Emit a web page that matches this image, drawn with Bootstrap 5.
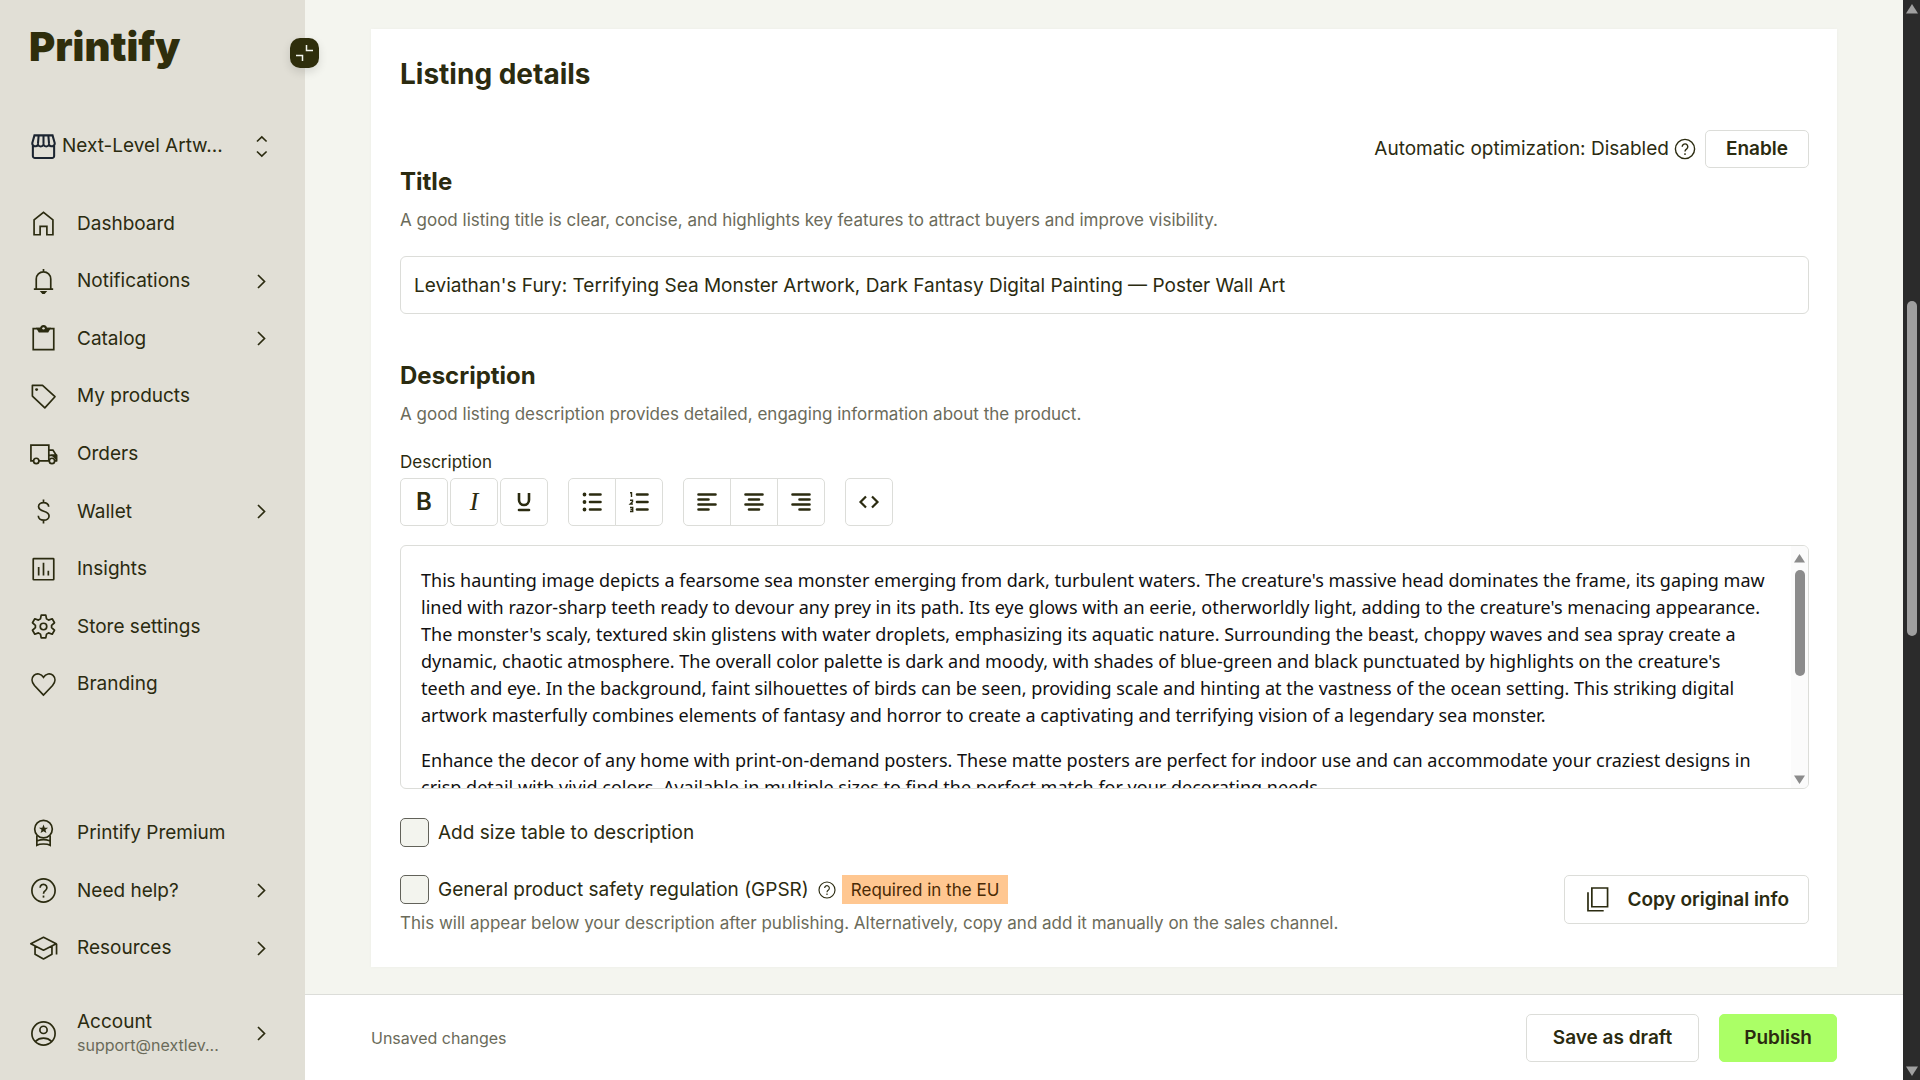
<!DOCTYPE html>
<html lang="en">
<head>
<meta charset="utf-8">
<meta name="viewport" content="width=device-width, initial-scale=1">
<title>Listing details</title>
<link href="https://cdn.jsdelivr.net/npm/bootstrap@5.3.0/dist/css/bootstrap.min.css" rel="stylesheet">
<style>
:root{--ink:#2b2b10;--muted:#6b6b5a;--line:#dcddd9;--cream:#f4f5ef;--sand:#e1dfd6}
body{font-family:Inter,"Liberation Sans",sans-serif;font-size:19px;line-height:24px;color:var(--ink);background:var(--cream)}
svg{flex:none;display:block}
.ic{width:29px;height:29px;fill:none;stroke:currentColor;stroke-width:1.4}
.ic-md{width:24px;height:24px}
.ic-sm{width:20px;height:20px}
.sidebar{width:305px;flex:none;background:var(--sand);position:relative;padding:0 0 18px}
.logo{font-size:40px;line-height:40px;font-weight:900;color:#2f2e0c;padding:27px 29px 0;text-decoration:none}
.toggle{position:absolute;right:-14px;top:38px;width:29px;height:30px;border:0;border-radius:10px;background:#2f2e0c;padding:0;box-shadow:0 4px 10px rgba(0,0,0,.12)}
.store{margin-top:50px;padding:0 29px;height:58px;border:0;background:none;color:inherit;text-align:left}
.store .ic{color:#1b2430;stroke-width:1.7}
.main-nav{margin-top:20px;height:518px}
.foot-nav{height:173px}
.side-item{color:inherit;text-decoration:none;padding:0 29px;gap:19px}
.chev{width:29px;height:29px;fill:none;stroke:currentColor;stroke-width:1.7}
.account{margin-top:27px;height:58px}
.account .mail{font-size:16px;line-height:22px;color:var(--muted)}
.muted{color:var(--muted);font-size:17px;line-height:24px}
.main-col{min-width:0}
.scroll-zone{padding:29px 66px 24px;min-height:0}
.panel{background:#fff;padding:28px 28px 32px 29px;box-shadow:0 0 4px rgba(0,0,0,.03)}
h1{font-size:28px;line-height:34px;font-weight:700;margin:0 0 39px}
h2{font-size:24px;line-height:28px;font-weight:700;margin:0 0 12px}
.field-label{color:var(--ink)}
.btn-line{border:1px solid var(--line);border-radius:5px;background:#fff;color:var(--ink);font-size:19px;line-height:24px;font-weight:600;padding:11px 24px}
.btn-line:hover{background:var(--cream);border-color:var(--line)}
.btn-short{padding:6px 20px}
.btn-go{background:#abff66;border-color:#abff66}
.title-box{height:58px;font-size:19px;padding:0 13px;border-color:var(--line);color:var(--ink);border-radius:6px}
.tools{gap:20px;margin-bottom:19px}
.tool{width:48px;height:48px;padding:0;display:flex;align-items:center;justify-content:center;flex:none}
.tool svg{width:24px;height:24px;fill:none;stroke:currentColor;stroke-width:2.6;stroke-linecap:round}
.tools .btn-group .tool{flex:none}
.tri{gap:2px}
.letter-b{font-size:24px;font-weight:600}
.letter-i{font:italic 26px/26px "Liberation Serif",serif}
.editor-frame{border:1px solid var(--line);border-radius:6px;height:244px;overflow:hidden}
.editor{font-family:"Noto Sans",sans-serif;font-size:18px;line-height:27px;color:#111;padding:21px 24px 0 20px;overflow:hidden;outline:0}
.editor p{margin:0 0 18px}
.bar{width:17px;flex:none;background:#fbfbfb;color:#8b8b8b}
.bar .thumb{width:10px;border-radius:5px;background:#8b8b8b;height:106px;margin-top:7px}
.page-bar{background:#2b2b2b;color:#a0a0a0}
.page-bar .thumb{background:#a0a0a0;margin-top:287px;height:335px}
.size-row{margin:29px 0 28px}
.tick{width:29px;height:29px;margin:0;flex:none;border:1px solid #62625a;background-color:#f3f4ee}
.tick.form-check-input[type=checkbox]{border-radius:5px}
.tick-label{padding-left:9px}
.eu-tag{background:#ffc791;color:#4a2a05;font-size:17px;line-height:22px;padding:4px 9px 3px;margin-left:5px}
.gpsr-note{margin-top:7px}
.copy-btn{gap:14px;padding:9px 19px}
.action-bar{background:#fff;border-top:1px solid var(--line);padding:19px 66px 18px;gap:20px}
.note{font-size:16px}
.save-btn{padding:11px 26px}
</style>
<script src="https://cdn.jsdelivr.net/npm/bootstrap@5.3.0/dist/js/bootstrap.bundle.min.js"></script>
</head>
<body>
<svg class="d-none">
  <symbol id="chev" viewBox="0 0 29 29"><path d="M11 8l6.500 6.500L11 21"/></symbol>
  <symbol id="help" viewBox="0 0 24 24"><circle cx="12" cy="12" r="9.600"/><path d="M9.200 9.700a2.800 2.800 0 1 1 4.500 2.200c-1.100.8-1.700 1.300-1.700 2.700"/><path d="M12 16.200v1.700" /></symbol>
</svg>
<div class="d-flex vh-100 overflow-hidden">
  <aside class="sidebar d-flex flex-column">
    <a class="logo" href="#">Printify</a>
    <button class="toggle" type="button" aria-label="Collapse menu"><svg width="29" height="30" viewBox="0 0 29 30" fill="none" stroke="#f4f5ef" stroke-width="1.500"><path d="M16.500 7v5.500H23M6 17.500h6.500V23"/></svg></button>
    <button class="store d-flex align-items-center" type="button">
      <svg class="ic" viewBox="0 0 24 24"><path d="M3.200 11.500v8.300a1.700 1.700 0 0 0 1.700 1.700h14.200a1.700 1.700 0 0 0 1.700-1.700v-8.300M4.500 2.800h15l1.800 6.400a2.500 2.500 0 0 1-4.700 1.300 2.500 2.500 0 0 1-4.600 0 2.500 2.500 0 0 1-4.600 0A2.500 2.500 0 0 1 2.700 9.200zM8 2.800l-.6 7M12 2.800v7M16 2.800l.6 7"/></svg>
      <span class="ms-1 flex-fill">Next-Level Artw...</span>
      <svg class="chev" viewBox="0 0 29 29"><path d="M10 9.500L14.800 5l4.800 4.500M10 19.500l4.800 4.500 4.800-4.500"/></svg>
    </button>
    <nav class="main-nav d-flex flex-column">
      <a class="side-item flex-fill d-flex align-items-center" href="#"><svg class="ic" viewBox="0 0 24 24"><path d="M4.200 9L12 2.700 19.800 9v12.300h-5v-7H9.200v7h-5z"/></svg>Dashboard</a>
      <a class="side-item flex-fill d-flex align-items-center" href="#"><svg class="ic" viewBox="0 0 24 24"><path d="M4 18.300h16M6 18.300V10a6 6 0 0 1 12 0v8.300M12 1.700v2"/><path d="M10.400 20.500h3.200l-1 1.200h-1.200z" fill="currentColor"/></svg><span class="flex-fill">Notifications</span><svg class="chev"><use href="#chev"/></svg></a>
      <a class="side-item flex-fill d-flex align-items-center" href="#"><svg class="ic" viewBox="0 0 24 24"><path d="M3.500 3.800h17v17.400h-17z"/><path d="M7 3.800h2.800a2.200 2.200 0 0 1 4.400 0H17l-1.500 2.500h-7z" fill="currentColor"/><circle cx="12" cy="3.600" r="1" fill="#e1dfd6" stroke="none"/></svg><span class="flex-fill">Catalog</span><svg class="chev"><use href="#chev"/></svg></a>
      <a class="side-item flex-fill d-flex align-items-center" href="#"><svg class="ic" viewBox="0 0 24 24"><path d="M2.800 2.800h8.400l10.300 9.400-8.400 9.200L2.800 11.600z" stroke-linejoin="round"/><circle cx="6.300" cy="6.300" r="1.200" fill="currentColor" stroke="none"/></svg>My products</a>
      <a class="side-item flex-fill d-flex align-items-center" href="#"><svg class="ic" viewBox="0 0 24 24"><path d="M3.800 17.300H1.600V4.300h14.800v13H8.200M16.400 8.300h3.400l2.900 4.500v4.500h-1.200M16.400 12.800h6"/><path d="M19.500 12.800h3.200v3z" fill="currentColor"/><circle cx="6" cy="17.300" r="2.200"/><circle cx="19" cy="17.300" r="2.200"/></svg>Orders</a>
      <a class="side-item flex-fill d-flex align-items-center" href="#"><svg class="ic" viewBox="0 0 24 24"><path d="M16.300 8c0-2.100-1.900-3.300-4.200-3.300S7.900 6 7.900 8c0 4.800 8.700 2.800 8.700 7.700 0 2.100-1.900 3.500-4.400 3.500s-4.500-1.400-4.500-3.600M12 2v2.700M12 19.200V22"/></svg><span class="flex-fill">Wallet</span><svg class="chev"><use href="#chev"/></svg></a>
      <a class="side-item flex-fill d-flex align-items-center" href="#"><svg class="ic" viewBox="0 0 24 24"><rect x="3.500" y="3" width="17" height="17.500" rx=".5"/><path d="M8 10v7M12 6.500V17M16 13v4"/></svg>Insights</a>
      <a class="side-item flex-fill d-flex align-items-center" href="#"><svg class="ic" viewBox="0 0 24 24"><path d="M10.100 2.600h3.800l.6 3.100 1.700 1 3-1.100 1.900 3.300-2.400 2.100v2l2.400 2.100-1.900 3.300-3-1.100-1.700 1-.6 3.100h-3.800l-.6-3.100-1.700-1-3 1.100-1.900-3.300L5.300 13v-2L2.900 8.900l1.900-3.300 3 1.100 1.700-1z" stroke-linejoin="round"/><circle cx="12" cy="12" r="2.700"/></svg>Store settings</a>
      <a class="side-item flex-fill d-flex align-items-center" href="#"><svg class="ic" viewBox="0 0 24 24"><path d="M12 20.800l-7.500-8C1.900 9.800 2 6.500 4.100 4.500 6.400 2.300 10.100 3 12 6c1.900-3 5.600-3.700 7.900-1.500 2.100 2 2.200 5.300-.4 8.300z"/></svg>Branding</a>
    </nav>
    <nav class="foot-nav mt-auto d-flex flex-column">
      <a class="side-item flex-fill d-flex align-items-center" href="#"><svg class="ic" viewBox="0 0 24 24"><circle cx="12" cy="9.200" r="7.300"/><path d="M6.500 14.500v8c1.800-1 3.600-1 5.500-1s3.700 0 5.500 1v-8M7 18.800c3.300-1.200 6.700-1.200 10 0"/><path d="M12 5.300l1 2.700h2.800l-2.200 1.700.8 2.800-2.400-1.600-2.400 1.600.8-2.800L8.200 8H11z" fill="currentColor" stroke="none"/></svg>Printify Premium</a>
      <a class="side-item flex-fill d-flex align-items-center" href="#"><svg class="ic"><use href="#help"/></svg><span class="flex-fill">Need help?</span><svg class="chev"><use href="#chev"/></svg></a>
      <a class="side-item flex-fill d-flex align-items-center" href="#"><svg class="ic" viewBox="0 0 24 24"><path d="M1.500 8L12 2.700 22.500 8 12 13.400zM5 9.900v6.800l7 3.900 7-3.900V9.900M22.800 8v8.900" stroke-linejoin="round"/></svg><span class="flex-fill">Resources</span><svg class="chev"><use href="#chev"/></svg></a>
    </nav>
    <a class="side-item account d-flex align-items-center" href="#"><svg class="ic" viewBox="0 0 24 24"><circle cx="12" cy="12" r="9.600"/><circle cx="12" cy="9" r="3"/><path d="M5.400 18.500c3.500-3.500 9.700-3.500 13.200 0"/></svg><span class="flex-fill d-flex flex-column"><span>Account</span><span class="mail">support@nextlev...</span></span><svg class="chev"><use href="#chev"/></svg></a>
  </aside>

  <div class="main-col flex-fill d-flex flex-column">
    <main class="scroll-zone flex-fill overflow-hidden">
      <section class="panel">
        <h1>Listing details</h1>
        <div class="d-flex justify-content-end align-items-center">
          <span class="me-1">Automatic optimization: Disabled</span>
          <svg class="ic ic-md me-2"><use href="#help"/></svg>
          <button class="btn btn-line btn-short" type="button">Enable</button>
        </div>
        <h2><label for="listing-title">Title</label></h2>
        <p class="muted mb-4">A good listing title is clear, concise, and highlights key features to attract buyers and improve visibility.</p>
        <input id="listing-title" class="form-control title-box" type="text" value="Leviathan's Fury: Terrifying Sea Monster Artwork, Dark Fantasy Digital Painting — Poster Wall Art">
        <h2 class="mt-5 pb-0">Description</h2>
        <p class="muted mb-4">A good listing description provides detailed, engaging information about the product.</p>
        <div class="muted field-label mb-1" id="desc-label">Description</div>
        <div class="tools d-flex" role="toolbar" aria-label="Text formatting">
          <div class="tri d-flex">
            <button class="btn btn-line tool" type="button" aria-label="Bold"><span class="letter-b">B</span></button>
            <button class="btn btn-line tool" type="button" aria-label="Italic"><span class="letter-i">I</span></button>
            <button class="btn btn-line tool" type="button" aria-label="Underline"><svg viewBox="0 0 24 24"><path d="M7 3v7a5 5 0 0 0 10 0V3" stroke-linecap="butt"/><path d="M7 20h10"/></svg></button>
          </div>
          <div class="btn-group">
            <button class="btn btn-line tool" type="button" aria-label="Bulleted list"><svg viewBox="0 0 24 24"><path d="M10 4.500h10.500M10 12h10.500M10 19.500h10.500"/><path d="M4.500 4.500h0M4.500 12h0M4.500 19.500h0" stroke-width="3.800"/></svg></button>
            <button class="btn btn-line tool" type="button" aria-label="Numbered list"><svg viewBox="0 0 24 24"><path d="M10 4.500h10.500M10 12h10.500M10 19.500h10.500"/><path d="M3 2.800h1.500V7M3 10.200h2.500v1.500L3.200 14h2.700M3 17.500h2.700v4H3M3.500 19.500h2" stroke-width="1.400" stroke-linecap="butt"/></svg></button>
          </div>
          <div class="btn-group">
            <button class="btn btn-line tool" type="button" aria-label="Align left"><svg viewBox="0 0 24 24"><path d="M3.500 4.500h17M3.500 9.500h10M3.500 14.500h17M3.500 19.500h10"/></svg></button>
            <button class="btn btn-line tool" type="button" aria-label="Align center"><svg viewBox="0 0 24 24"><path d="M3.500 4.500h17M7 9.500h10M3.500 14.500h17M7 19.500h10"/></svg></button>
            <button class="btn btn-line tool" type="button" aria-label="Align right"><svg viewBox="0 0 24 24"><path d="M3.500 4.500h17M10.500 9.500h10M3.500 14.500h17M10.500 19.500h10"/></svg></button>
          </div>
          <button class="btn btn-line tool" type="button" aria-label="Source code"><svg viewBox="0 0 24 24"><path d="M9 6.500L3.500 12 9 17.500M15 6.500l5.500 5.500-5.500 5.500" stroke-width="2.200" stroke-linecap="butt"/></svg></button>
        </div>
        <div class="editor-frame d-flex">
          <div class="editor flex-fill" contenteditable="true" role="textbox" aria-multiline="true" aria-labelledby="desc-label" spellcheck="false">
            <p>This haunting image depicts a fearsome sea monster emerging from dark, turbulent waters. The creature's massive head dominates the frame, its gaping maw lined with razor-sharp teeth ready to devour any prey in its path. Its eye glows with an eerie, otherworldly light, adding to the creature's menacing appearance. The monster's scaly, textured skin glistens with water droplets, emphasizing its aquatic nature. Surrounding the beast, choppy waves and sea spray create a dynamic, chaotic atmosphere. The overall color palette is dark and moody, with shades of blue-green and black punctuated by highlights on the creature's teeth and eye. In the background, faint silhouettes of birds can be seen, providing scale and hinting at the vastness of the ocean setting. This striking digital artwork masterfully combines elements of fantasy and horror to create a captivating and terrifying vision of a legendary sea monster.</p>
            <p>Enhance the decor of any home with print-on-demand posters. These matte posters are perfect for indoor use and can accommodate your craziest designs in crisp detail with vivid colors. Available in multiple sizes to find the perfect match for your decorating needs.</p>
          </div>
          <div class="bar d-flex flex-column align-items-center" aria-hidden="true">
            <svg class="mt-2" width="11" height="9" viewBox="0 0 11 9" fill="currentColor"><path d="M5.500 0L11 8.500H0z"/></svg>
            <div class="thumb"></div>
            <svg class="mt-auto mb-1" width="11" height="9" viewBox="0 0 11 9" fill="currentColor"><path d="M0 .5h11L5.500 9z"/></svg>
          </div>
        </div>
        <div class="size-row d-flex align-items-center">
          <input class="form-check-input tick" type="checkbox" id="size-table">
          <label class="tick-label" for="size-table">Add size table to description</label>
        </div>
        <div class="d-flex justify-content-between align-items-start">
          <div>
            <div class="d-flex align-items-center">
              <input class="form-check-input tick" type="checkbox" id="gpsr">
              <label class="tick-label me-2" for="gpsr">General product safety regulation (GPSR)</label>
              <svg class="ic ic-sm"><use href="#help"/></svg>
              <span class="eu-tag">Required in the EU</span>
            </div>
            <p class="muted gpsr-note mb-0">This will appear below your description after publishing. Alternatively, copy and add it manually on the sales channel.</p>
          </div>
          <button class="btn btn-line d-flex align-items-center copy-btn" type="button"><svg class="ic" viewBox="0 0 24 24"><path d="M6.500 2.500h13v15.500h-13zM3.300 6v15.300h13"/></svg>Copy original info</button>
        </div>
      </section>
    </main>
    <footer class="action-bar d-flex align-items-center">
      <span class="muted note me-auto">Unsaved changes</span>
      <button class="btn btn-line save-btn" type="button">Save as draft</button>
      <button class="btn btn-line btn-go" type="button">Publish</button>
    </footer>
  </div>
  <div class="bar page-bar d-flex flex-column align-items-center" aria-hidden="true">
    <svg class="mt-1" width="12" height="10" viewBox="0 0 12 10" fill="currentColor"><path d="M6 0l6 9.500H0z"/></svg>
    <div class="thumb"></div>
    <svg class="mt-auto mb-1" width="12" height="10" viewBox="0 0 12 10" fill="currentColor"><path d="M0 .5h12L6 10z"/></svg>
  </div>
</div>
</body>
</html>
